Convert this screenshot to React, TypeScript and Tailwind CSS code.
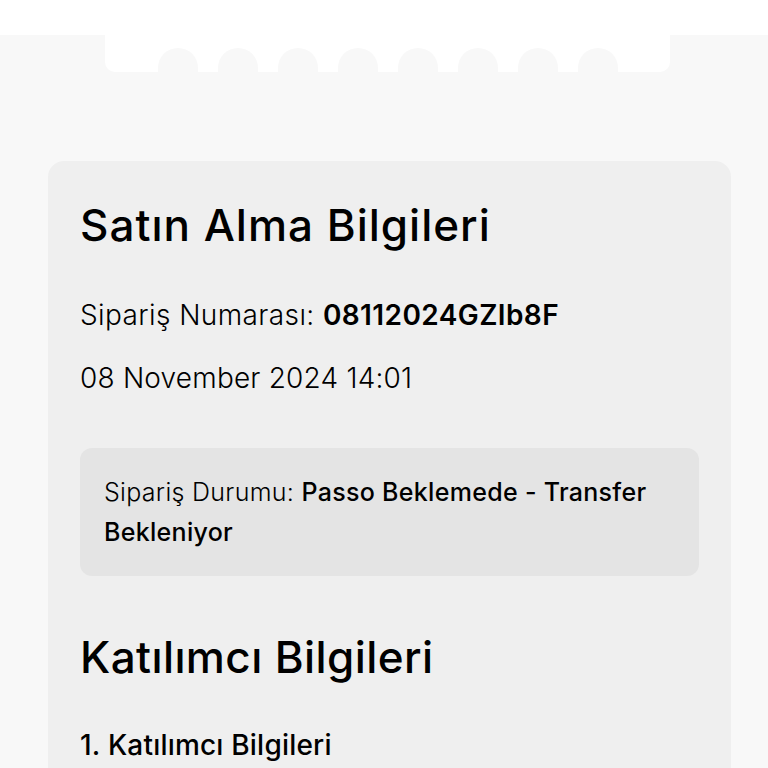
import React from 'react';

const bumps = [0, 1, 2, 3, 4, 5, 6, 7];

export default function App() {
  return (
    <div className="min-h-screen bg-[#f8f8f8] font-['Inter',sans-serif] text-black overflow-hidden">
      {/* TICKET TOP */}
      <div className="h-[35px] bg-white" />
      <div className="flex pl-[105px]">
        <div className="w-[565px] h-[37px] bg-white rounded-b-[10px] flex items-end justify-center gap-5">
          {bumps.map((b) => (
            <div key={b} className="w-10 h-6 rounded-t-[20px] bg-[#f8f8f8]" />
          ))}
        </div>
      </div>

      {/* PURCHASE CARD */}
      <div className="mt-[89px] ml-[48px] mr-[37px] bg-[#efefef] rounded-t-2xl px-8 pt-[36px] pb-10">
        <h2 className="text-[44px] leading-[56px] font-medium tracking-[1px]">Satın Alma Bilgileri</h2>

        <p className="mt-[42px] text-[28px] leading-[40px] font-light tracking-[0.4px]">
          Sipariş Numarası: <span className="font-semibold">08112024GZIb8F</span>
        </p>
        <p className="mt-[23px] text-[28px] leading-[40px] font-light tracking-[0.2px]">08 November 2024 14:01</p>

        <p className="mt-[50px] bg-[#e4e4e4] rounded-xl px-6 py-[24px] text-[25px] leading-[40px] tracking-[0.3px] font-light">
          Sipariş Durumu: <b className="font-medium">Passo Beklemede - Transfer Bekleniyor</b>
        </p>

        <h2 className="mt-[53px] text-[44px] leading-[56px] font-medium tracking-[0.4px]">Katılımcı Bilgileri</h2>

        <h3 className="mt-[40px] text-[28px] leading-[40px] font-medium tracking-[0.2px]">1. Katılımcı Bilgileri</h3>
      </div>
    </div>
  );
}
